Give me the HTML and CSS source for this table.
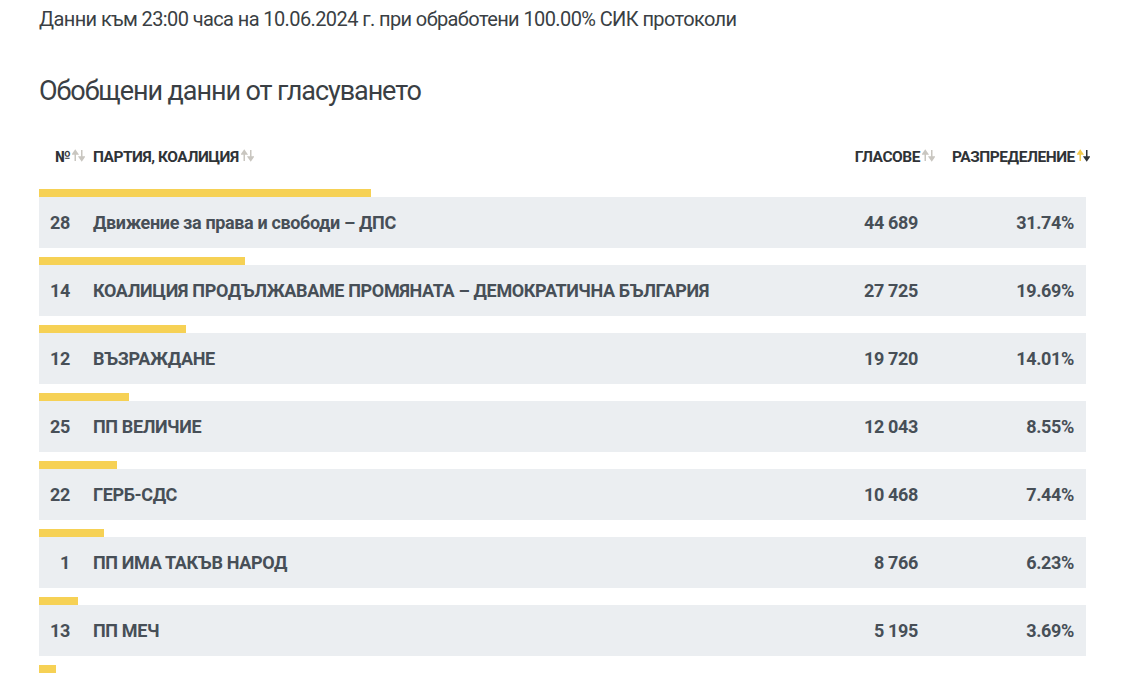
FILE: index.html
```html
<!DOCTYPE html>
<html lang="bg">
<head>
<meta charset="utf-8">
<title>Обобщени данни от гласуването</title>
<link rel="stylesheet" href="styles.css">
</head>
<body>
<div class="page">
  <p class="meta">Данни към 23:00 часа на 10.06.2024 г. при обработени 100.00% СИК протоколи</p>
  <h2 class="title">Обобщени данни от гласуването</h2>

  <div class="head">
    <div class="h-num">№<svg class="sort" viewBox="0 0 12 12"><path class="up" d="M3 11V2.5M0.8 4.6L3 1.4 5.2 4.6z"/><path class="dn" d="M9 1v8.5M6.8 7.4L9 10.6 11.2 7.4z"/></svg></div>
    <div class="h-name">Партия, коалиция<svg class="sort" viewBox="0 0 12 12"><path class="up" d="M3 11V2.5M0.8 4.6L3 1.4 5.2 4.6z"/><path class="dn" d="M9 1v8.5M6.8 7.4L9 10.6 11.2 7.4z"/></svg></div>
    <div class="h-votes">Гласове<svg class="sort" viewBox="0 0 12 12"><path class="up" d="M3 11V2.5M0.8 4.6L3 1.4 5.2 4.6z"/><path class="dn" d="M9 1v8.5M6.8 7.4L9 10.6 11.2 7.4z"/></svg></div>
    <div class="h-pct">Разпределение<svg class="sort active" viewBox="0 0 12 12"><path class="up" d="M3 11V2.5M0.8 4.6L3 1.4 5.2 4.6z"/><path class="dn" d="M9 1v8.5M6.8 7.4L9 10.6 11.2 7.4z"/></svg></div>
  </div>

  <div class="list">
    <div class="item">
      <div class="bar" style="width:31.74%"></div>
      <div class="row"><span class="num">28</span><span class="name">Движение за права и свободи – ДПС</span><span class="votes">44 689</span><span class="pct">31.74%</span></div>
    </div>
    <div class="item">
      <div class="bar" style="width:19.69%"></div>
      <div class="row"><span class="num">14</span><span class="name">КОАЛИЦИЯ ПРОДЪЛЖАВАМЕ ПРОМЯНАТА – ДЕМОКРАТИЧНА БЪЛГАРИЯ</span><span class="votes">27 725</span><span class="pct">19.69%</span></div>
    </div>
    <div class="item">
      <div class="bar" style="width:14.01%"></div>
      <div class="row"><span class="num">12</span><span class="name">ВЪЗРАЖДАНЕ</span><span class="votes">19 720</span><span class="pct">14.01%</span></div>
    </div>
    <div class="item">
      <div class="bar" style="width:8.55%"></div>
      <div class="row"><span class="num">25</span><span class="name">ПП ВЕЛИЧИЕ</span><span class="votes">12 043</span><span class="pct">8.55%</span></div>
    </div>
    <div class="item">
      <div class="bar" style="width:7.44%"></div>
      <div class="row"><span class="num">22</span><span class="name">ГЕРБ-СДС</span><span class="votes">10 468</span><span class="pct">7.44%</span></div>
    </div>
    <div class="item">
      <div class="bar" style="width:6.23%"></div>
      <div class="row"><span class="num">1</span><span class="name">ПП ИМА ТАКЪВ НАРОД</span><span class="votes">8 766</span><span class="pct">6.23%</span></div>
    </div>
    <div class="item">
      <div class="bar" style="width:3.69%"></div>
      <div class="row"><span class="num">13</span><span class="name">ПП МЕЧ</span><span class="votes">5 195</span><span class="pct">3.69%</span></div>
    </div>
    <div class="item">
      <div class="bar" style="width:1.6%"></div>
    </div>
  </div>
</div>
</body>
</html>
```

FILE: styles.css
```css
html, body {
  margin: 0;
  padding: 0;
  background: #ffffff;
  overflow: hidden;
}
body {
  font-family: Roboto, "Noto Sans", "Liberation Sans", sans-serif;
  color: #333a40;
}
.page {
  padding-left: 39px;
  width: 1054px;
}
.meta {
  margin: 0;
  padding-top: 8px;
  font-size: 20px;
  line-height: 22px;
  letter-spacing: -0.03em;
  color: #3a3f44;
}
.title {
  margin: 0;
  padding-top: 46px;
  font-size: 27px;
  line-height: 30px;
  font-weight: 400;
  letter-spacing: -0.04em;
  color: #3a3f44;
}
.head {
  display: flex;
  align-items: center;
  margin-top: 42px;
  height: 18px;
  font-size: 15.5px;
  font-weight: 700;
  text-transform: uppercase;
  letter-spacing: -0.03em;
  color: #2f3337;
}
.head > div {
  display: flex;
  align-items: center;
}
.h-num {
  width: 38px;
  padding-left: 16px;
}
.h-name {
  flex: 1;
}
.h-votes {
  width: 120px;
  justify-content: flex-end;
}
.h-pct {
  width: 141px;
  margin-left: 17px;
}
.sort {
  width: 13px;
  height: 13px;
  margin-left: 2px;
  margin-top: -3px;
  flex: none;
}
.sort path {
  stroke-width: 1.4;
}
.sort .up, .sort .dn {
  stroke: #c9c6c0;
  fill: #c9c6c0;
}
.sort.active .up {
  stroke: #f2c94c;
  fill: #f2c94c;
}
.sort.active .dn {
  stroke: #2f3337;
  fill: #2f3337;
}
.list {
  margin-top: 23px;
  width: 1047px;
}
.item {
  height: 68px;
}
.bar {
  height: 8px;
  background: #f6d155;
}
.row {
  display: flex;
  align-items: center;
  height: 51px;
  background: #ebeef1;
  font-size: 18px;
  font-weight: 700;
  letter-spacing: -0.02em;
  color: #474f57;
  padding-right: 12px;
}
.num {
  width: 31px;
  text-align: right;
  margin-right: 23px;
}
.name {
  flex: 1;
}
.votes {
  width: 120px;
  text-align: right;
}
.pct {
  width: 156px;
  text-align: right;
}
```
